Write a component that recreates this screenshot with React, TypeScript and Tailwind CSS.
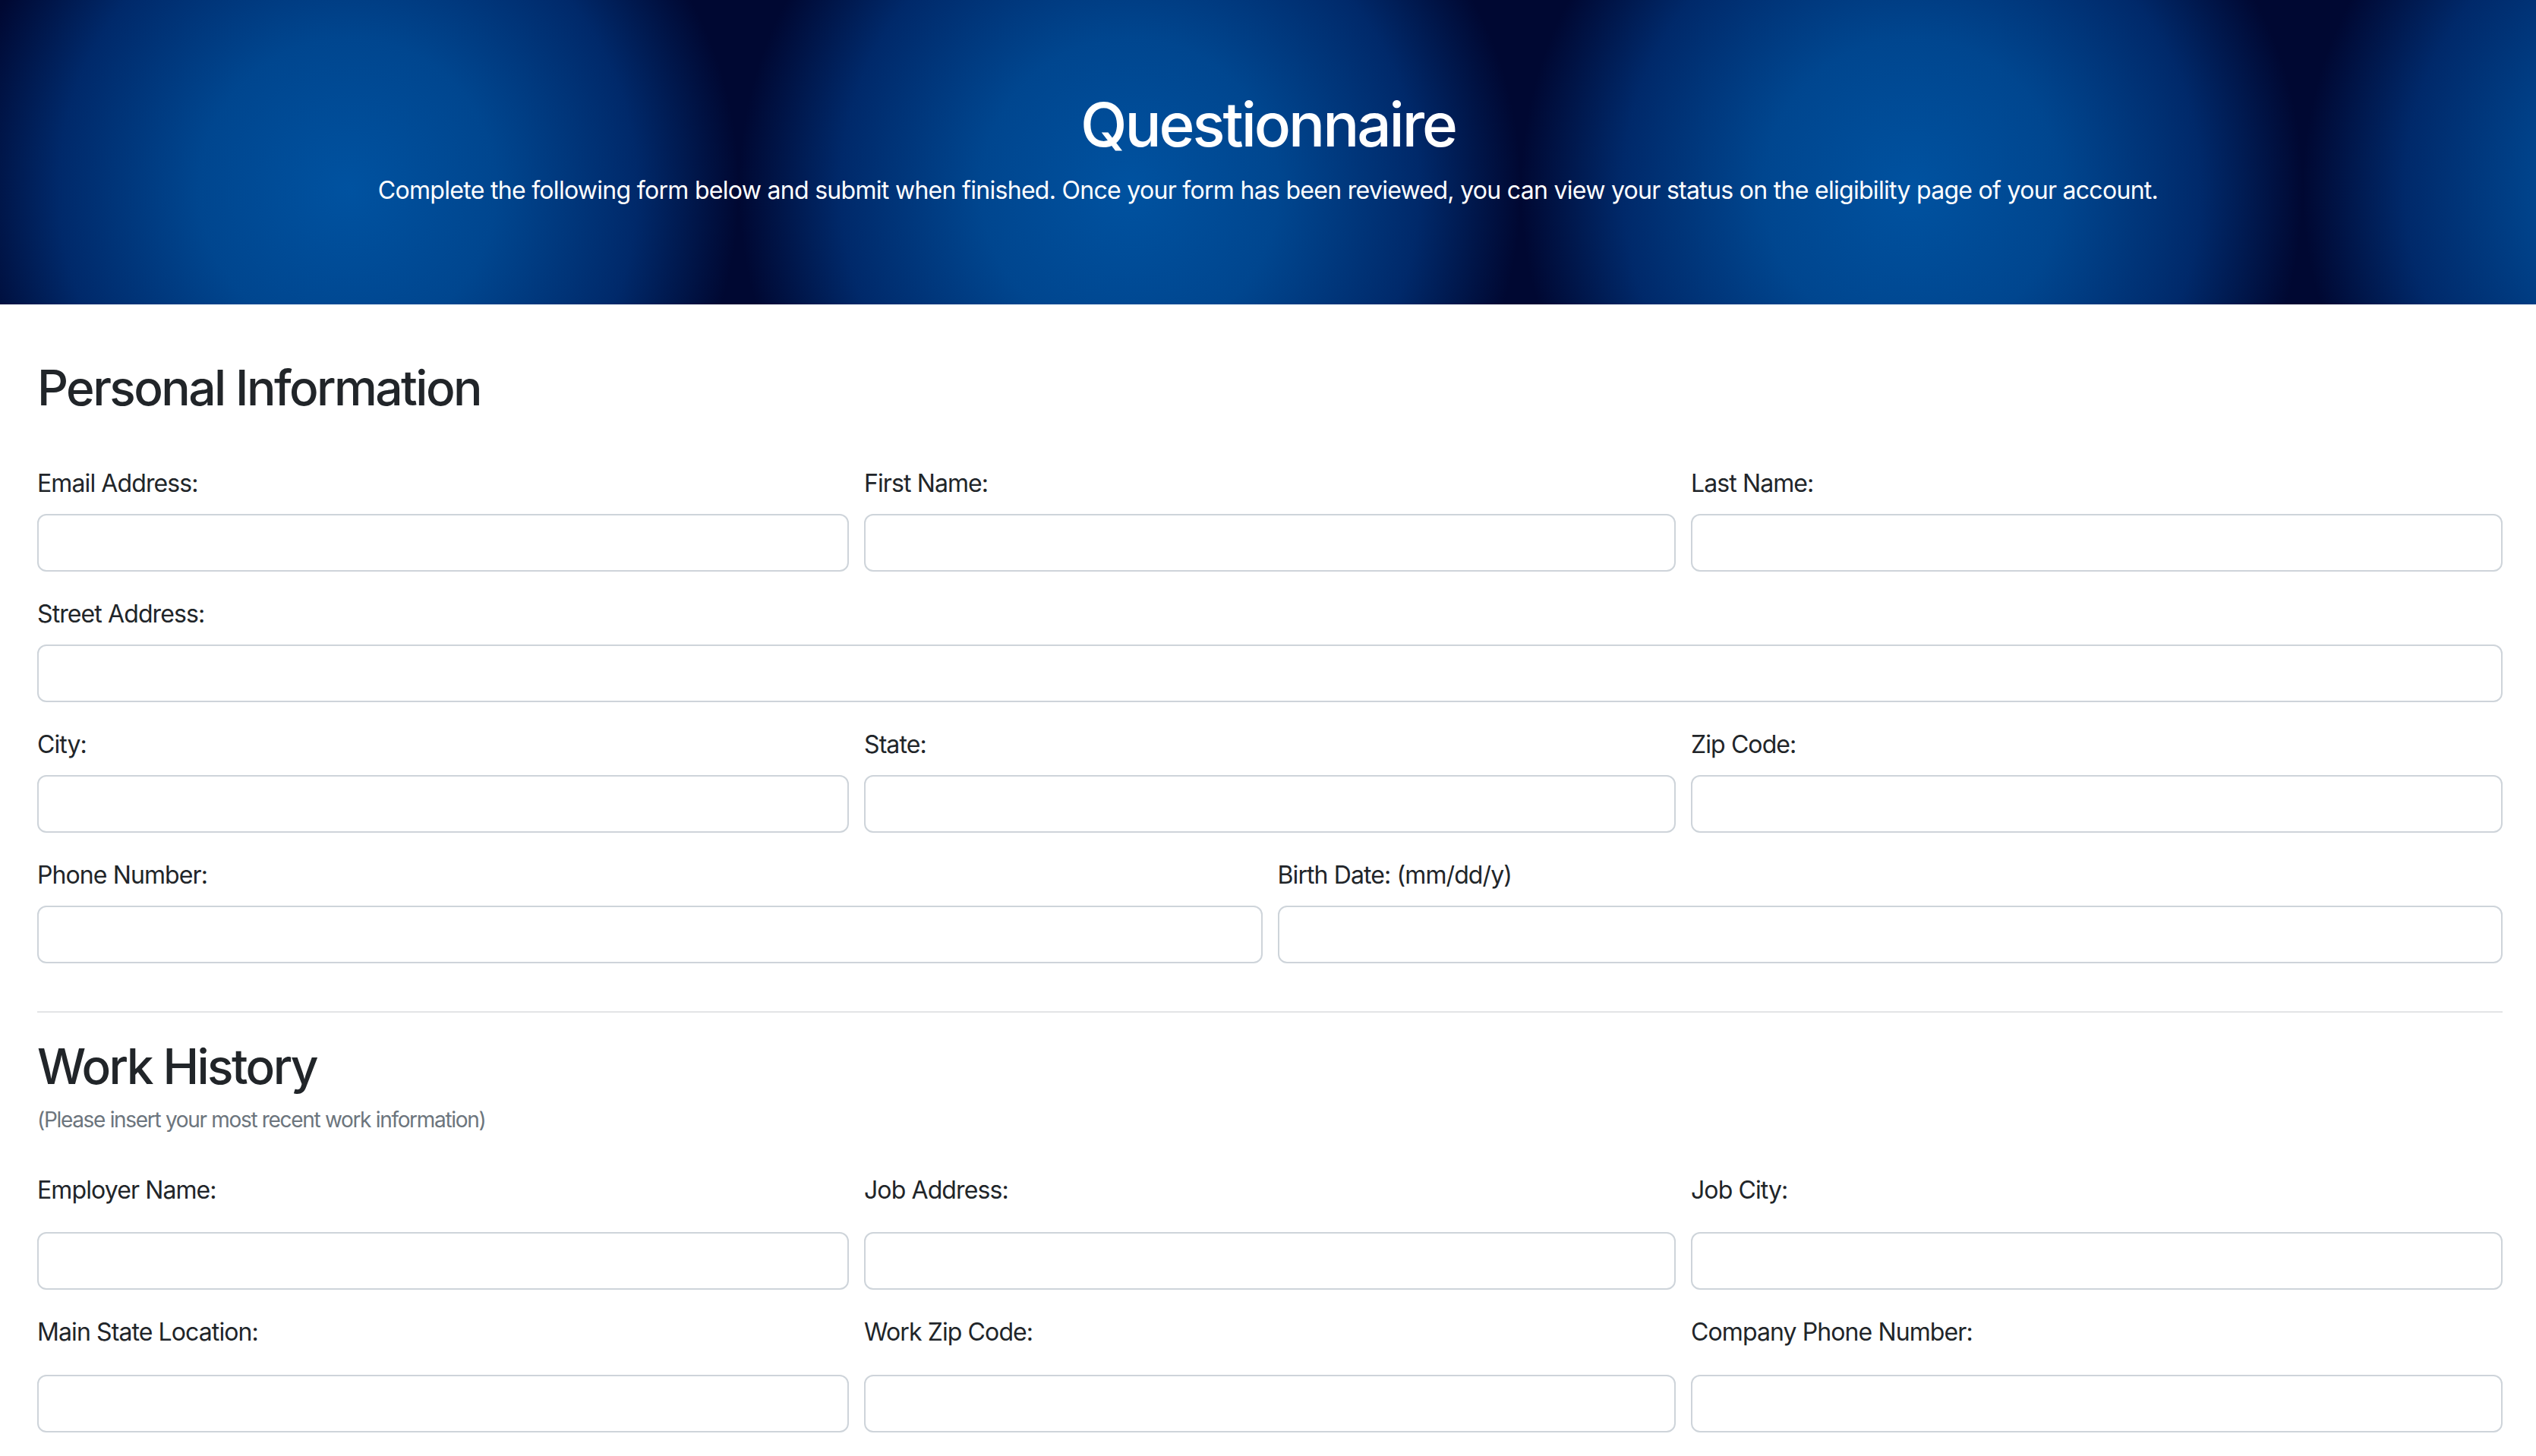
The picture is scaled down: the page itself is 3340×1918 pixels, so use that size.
type FieldProp = {
  label: string
  gap?: string
}

function Field({ label, gap = "mb-[16px]" }: FieldProp) {
  return (
    <div className="flex flex-col">
      <label className={`text-[32px] leading-[48px] tracking-[-0.028em] ${gap}`}>{label}</label>
      <input
        type="text"
        className="h-[76px] w-full rounded-[12px] border-2 border-[#ced4da] bg-white px-[24px] text-[32px] outline-none"
      />
    </div>
  )
}

export default function App() {
  return (
    <div className="min-h-screen bg-white font-['Inter','Liberation_Sans',sans-serif] text-[#212529]">
      <header className="flex h-[401px] flex-col items-center justify-center bg-[#001a4d] bg-[radial-gradient(ellipse_515px_520px_at_50%_62%,#0052a0_0%,#00468f_38%,#00296a_74%,#000832_100%)] bg-[length:1030px_100%] bg-[position:-57px_0] pb-[10px] text-white">
        <h1 className="text-[80px] font-[550] leading-[96px] tracking-[-0.038em]">Questionnaire</h1>
        <p className="mt-[15px] text-[32px] leading-[48px] tracking-[-0.022em]">
          Complete the following form below and submit when finished. Once your form has been reviewed, you can view your status on the eligibility page of your account.
        </p>
      </header>

      <main className="pl-[49px] pr-[44px] pt-[71px] pb-[40px]">
        <h2 className="mb-[64px] text-[64px] font-[550] leading-[77px] tracking-[-0.04em]">Personal Information</h2>

        <div className="grid grid-cols-3 gap-x-[20px]">
          <Field label="Email Address:" />
          <Field label="First Name:" />
          <Field label="Last Name:" />
        </div>
        <div className="mt-[32px]">
          <Field label="Street Address:" />
        </div>
        <div className="mt-[32px] grid grid-cols-3 gap-x-[20px]">
          <Field label="City:" />
          <Field label="State:" />
          <Field label="Zip Code:" />
        </div>
        <div className="mt-[32px] grid grid-cols-2 gap-x-[20px]">
          <Field label="Phone Number:" />
          <Field label="Birth Date: (mm/dd/y)" />
        </div>

        <hr className="mt-[63px] mb-[32px] h-[2px] border-0 bg-[#e3e4e6]" />

        <h2 className="mb-[11px] text-[64px] font-[550] leading-[77px] tracking-[-0.04em]">Work History</h2>
        <p className="mb-[48px] text-[28px] leading-[42px] tracking-[-0.047em] text-[#6c757d]">(Please insert your most recent work information)</p>

        <div className="grid grid-cols-3 gap-x-[20px]">
          <Field label="Employer Name:" gap="mb-[31px]" />
          <Field label="Job Address:" gap="mb-[31px]" />
          <Field label="Job City:" gap="mb-[31px]" />
        </div>
        <div className="mt-[32px] grid grid-cols-3 gap-x-[20px]">
          <Field label="Main State Location:" gap="mb-[32px]" />
          <Field label="Work Zip Code:" gap="mb-[32px]" />
          <Field label="Company Phone Number:" gap="mb-[32px]" />
        </div>
      </main>
    </div>
  )
}
